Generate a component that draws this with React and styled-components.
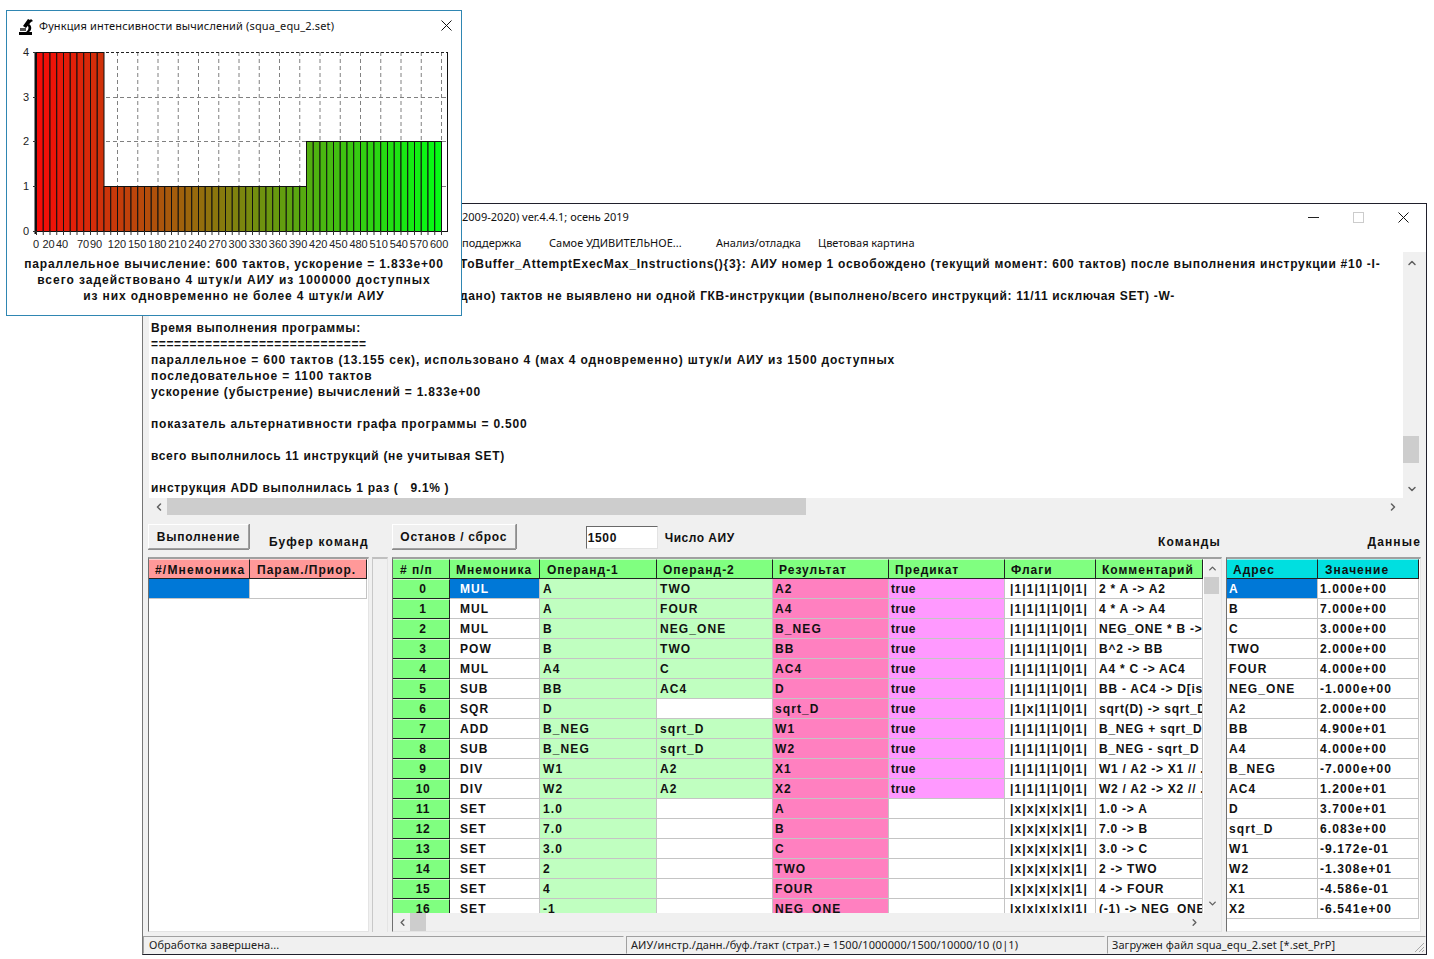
import React from "react";
import styled, { createGlobalStyle } from "styled-components";
import { ChevronUp, ChevronDown, ChevronLeft, ChevronRight } from "lucide-react";

const GlobalStyle = createGlobalStyle`
  html, body { margin: 0; padding: 0; background: #fff; }
  body { width: 1434px; height: 959px; overflow: hidden; font-family: "Liberation Sans", Arial, sans-serif; }
  * { box-sizing: border-box; }
`;

const ui = `"Noto Sans", "Open Sans", sans-serif`;
const sys = `font-family: "Liberation Sans", Arial, sans-serif; font-weight: 700; font-size: 12px; color: #111;`;

const Desktop = styled.div`
  position: relative;
  width: 1434px;
  height: 959px;
  background: #fff;
  overflow: hidden;
`;

const MainWindow = styled.div`
  position: absolute;
  left: 142px;
  top: 203px;
  width: 1285px;
  height: 752px;
  display: flex;
  flex-direction: column;
  background: #f0f0f0;
  border: 1px solid #20202c;
  border-left-color: #777;
`;

const TitleBar = styled.div`
  height: 28px;
  flex: none;
  display: flex;
  align-items: center;
  background: #fff;
  padding-left: 319px;
  font-family: ${ui};
  font-size: 11px;
  color: #111;
`;

const TitleText = styled.span`
  flex: 1;
  white-space: nowrap;
  margin-top: -3px;
`;

const WinButton = styled.span`
  width: 45px;
  height: 28px;
  display: flex;
  align-items: center;
  justify-content: center;
  margin-top: -2px;
`;

const MenuBar = styled.div`
  height: 20px;
  flex: none;
  display: flex;
  align-items: center;
  background: #fff;
  padding-left: 319px;
  font-family: ${ui};
  font-size: 11px;
  color: #111;
`;

const MenuItem = styled.span`
  width: ${(p) => p.$w}px;
  white-space: nowrap;
`;

const LogPanel = styled.div`
  height: 263px;
  flex: none;
  margin-left: 6px;
  width: 1271px;
  display: grid;
  grid-template-columns: 1254px 17px;
  grid-template-rows: 246px 17px;
  border-right: 1px solid #dcdcdc;
  border-bottom: 1px solid #dcdcdc;
`;

const LogBody = styled.div`
  background: #fff;
  padding: 4px 0 0 2px;
  overflow: hidden;
`;

const LogLine = styled.div`
  height: 16px;
  line-height: 16px;
  white-space: pre;
  padding-left: ${(p) => p.$indent || 0}px;
  letter-spacing: ${(p) => p.$ls}px;
  ${sys}
`;

const ScrollTrackV = styled.div`
  position: relative;
  background: #f0f0f0;
  display: flex;
  flex-direction: column;
  align-items: center;
  justify-content: space-between;
  padding: ${(p) => p.$pad || "4px 0"};
  color: #606060;
`;

const ScrollThumbV = styled.div`
  position: absolute;
  left: 0;
  width: ${(p) => p.$w}px;
  top: ${(p) => p.$top}px;
  height: ${(p) => p.$h}px;
  background: #cdcdcd;
`;

const ScrollTrackH = styled.div`
  position: relative;
  background: #f0f0f0;
  display: flex;
  align-items: center;
  justify-content: space-between;
  padding: 0 4px;
  color: #606060;
`;

const ScrollThumbH = styled.div`
  position: absolute;
  top: 0;
  bottom: 0;
  left: ${(p) => p.$left}px;
  width: ${(p) => p.$w}px;
  background: #cdcdcd;
`;

const Corner = styled.div`
  background: #f0f0f0;
`;

const Toolbar = styled.div`
  height: 42px;
  flex: none;
  position: relative;
  display: flex;
  padding: 9px 5px 0 5px;
`;

const RaisedButton = styled.button`
  width: ${(p) => p.$w}px;
  height: 25px;
  margin-left: ${(p) => p.$ml || 0}px;
  padding: 0;
  background: #f0f0f0;
  border: 1px solid;
  border-color: #fff #a0a0a0 #a0a0a0 #fff;
  box-shadow: 0 1px 0 #8c8c8c, 1px 0 0 #8c8c8c;
  letter-spacing: 0.75px;
  ${sys}
`;

const ToolLabel = styled.span`
  margin-left: ${(p) => p.$ml || 0}px;
  margin-top: ${(p) => p.$mt || 0}px;
  line-height: 16px;
  white-space: nowrap;
  letter-spacing: ${(p) => p.$ls || 1.15}px;
  ${sys}
`;

const SpacedRight = styled(ToolLabel)`
  position: absolute;
  top: 19px;
  right: ${(p) => p.$right}px;
`;

const NumberInput = styled.div`
  width: 72px;
  height: 23px;
  margin: 2px 0 0 70px;
  padding: 3px 0 0 1px;
  background: #fff;
  border: 1px solid;
  border-color: #696969 #e3e3e3 #e3e3e3 #696969;
  line-height: 16px;
  letter-spacing: 0.62px;
  ${sys}
`;

const TablesRow = styled.div`
  height: 375px;
  flex: none;
  display: flex;
  padding-left: 5px;
`;

const Frame = styled.div`
  width: ${(p) => p.$w}px;
  margin-left: ${(p) => p.$ml || 0}px;
  height: 375px;
  display: grid;
  grid-template-rows: 1fr ${(p) => (p.$hs ? "18px" : "0")};
  grid-template-columns: 1fr ${(p) => (p.$vs ? "17px" : "0")};
  background: #fff;
  border: 1px solid;
  border-color: #a0a0a0 #e4e4e4 #e4e4e4 #707070;
  border-top-width: 2px;
  overflow: hidden;
`;

const Strip = styled.div`
  width: 16px;
  margin-left: 3px;
  height: 375px;
  background: #f0f0f0;
  border-left: 1px solid #c8c8c8;
  border-top: 2px solid #c0c0c0;
  border-right: 1px solid #e4e4e4;
`;

const TableBody = styled.div`
  overflow: hidden;
  min-height: 0;
`;

const Row = styled.div`
  display: grid;
  grid-template-columns: ${(p) => p.$cols};
  height: 20px;
`;

const Head = styled.div`
  background: ${(p) => p.$bg};
  border-top: 1px solid rgba(255, 255, 255, 0.55);
  border-right: 1px solid #222;
  border-bottom: 1px solid #222;
  padding-left: ${(p) => p.$pad || 4}px;
  line-height: 20px;
  overflow: hidden;
  white-space: nowrap;
  letter-spacing: ${(p) => p.$ls || 1}px;
  ${sys}
`;

const Cell = styled.div`
  background: ${(p) => p.$bg || "#fff"};
  color: ${(p) => (p.$sel ? "#fff" : "#111")};
  border-right: 1px solid #c4c4c4;
  border-bottom: 1px solid #c4c4c4;
  padding-left: ${(p) => p.$pad || 3}px;
  line-height: 20px;
  overflow: hidden;
  white-space: pre;
  font-family: "Liberation Sans", Arial, sans-serif;
  font-weight: 700;
  font-size: 12px;
  letter-spacing: ${(p) => p.$ls || 1.1}px;
`;

const NumCell = styled.div`
  background: #80ff80;
  border-top: 1px solid #c8ffc8;
  border-right: 1px solid #222;
  border-bottom: 1px solid #222;
  padding-left: 4px;
  line-height: 18px;
  text-align: center;
  letter-spacing: 0.62px;
  ${sys}
`;

const StatusBar = styled.div`
  margin-top: 4px;
  flex: 1;
  display: flex;
  gap: 2px;
  font-family: ${ui};
  font-size: 11px;
  letter-spacing: 0.08px;
  color: #222;
`;

const StatusPanel = styled.div`
  width: ${(p) => p.$w}px;
  flex: ${(p) => (p.$w ? "none" : "1")};
  border: 1px solid;
  border-color: #a0a0a0 #f0f0f0 #f0f0f0 #a0a0a0;
  padding-left: ${(p) => p.$pad}px;
  line-height: 15px;
  white-space: nowrap;
  position: relative;
`;

const Grip = styled.svg`
  position: absolute;
  right: 0;
  bottom: 0;
`;

const Popup = styled.div`
  position: absolute;
  left: 6px;
  top: 10px;
  width: 456px;
  height: 306px;
  display: flex;
  flex-direction: column;
  background: #fff;
  border: 1px solid #2f86b2;
`;

const PopupTitle = styled.div`
  height: 30px;
  flex: none;
  display: flex;
  align-items: center;
  padding-left: 11px;
  font-family: ${ui};
  font-size: 11px;
  color: #111;
`;

const PopupTitleText = styled.span`
  flex: 1;
  margin: -2px 0 0 5px;
  white-space: nowrap;
  letter-spacing: 0.14px;
`;

const PopupClose = styled.span`
  width: 30px;
  display: flex;
  justify-content: center;
  margin-top: -1px;
`;

const ChartSvg = styled.svg`
  display: block;
  flex: none;
`;

const AxisLabel = styled.text`
  font-family: "Liberation Sans", Arial, sans-serif;
  font-size: 11px;
  fill: #222;
`;

const Caption = styled.div`
  text-align: center;
  margin-top: 1px;
`;

const CaptionLine = styled.div`
  line-height: 16px;
  white-space: nowrap;
  letter-spacing: ${(p) => p.$ls}px;
  ${sys}
`;

const Microscope = () => (
  <svg width="16" height="17" viewBox="0 0 16 17">
    <rect x="1" y="14" width="13" height="3" fill="#000" />
    <rect x="2" y="10" width="6" height="3" fill="#555" />
    <path d="M5 8 L10 1 L12 2 L13 1 L15 3 L13 4 L8 10 Z" fill="#000" />
    <path d="M11 6 C14 8 14 12 11 14 L8 14 C11 12 11 9 9.5 7.5 Z" fill="#000" />
  </svg>
);

const CloseIcon = ({ s = 11, c = "#111" }) => (
  <svg width={s} height={s} viewBox="0 0 11 11">
    <path d="M0.5 0.5 L10.5 10.5 M10.5 0.5 L0.5 10.5" stroke={c} strokeWidth="1" fill="none" />
  </svg>
);

const barW = 405 / 60;
const bars = Array.from({ length: 60 }, (_, i) => {
  const v = i < 10 ? 4 : i < 40 ? 1 : 2;
  const t = i / 59;
  return { i, v, color: `rgb(${Math.round(245 * (1 - t) + 5 * t)},${Math.round(12 * (1 - t) + 252 * t)},${Math.round(8 + 12 * t)})` };
});
const yOf = { 0: 231, 1: 186, 2: 141, 3: 97, 4: 52 };
const tickLabels = [
  [0, 36], [20, 48.5], [40, 62], [70, 83], [90, 96],
  ...Array.from({ length: 17 }, (_, i) => [120 + i * 30, 117 + i * 20.13]),
];

const Chart = () => (
  <ChartSvg width="454" height="214" viewBox="7 41 454 214">
    {Array.from({ length: 20 }, (_, k) => (
      <line key={k} x1={36.5 + (k + 1) * 20.25} x2={36.5 + (k + 1) * 20.25} y1="52" y2="231" stroke="#808080" strokeDasharray="4 3" />
    ))}
    {[97.5, 141.5, 186.5].map((y) => (
      <line key={y} x1="36" x2="447" y1={y} y2={y} stroke="#808080" strokeDasharray="4 3" />
    ))}
    <line x1="36" x2="447" y1="52.5" y2="52.5" stroke="#222" strokeDasharray="3 2" />
    {bars.map((b) => (
      <rect key={b.i} x={36 + b.i * barW + 0.5} y={yOf[b.v] + 0.5} width={barW} height={231 - yOf[b.v]} fill={b.color} stroke="#111" strokeWidth="1" />
    ))}
    <line x1="35.5" x2="35.5" y1="52" y2="234" stroke="#111" strokeWidth="2" />
    <line x1="447.5" x2="447.5" y1="52" y2="231" stroke="#111" />
    <line x1="36" x2="448" y1="231.5" y2="231.5" stroke="#111" />
    {Array.from({ length: 61 }, (_, i) => (
      <line key={i} x1={36.5 + i * barW} x2={36.5 + i * barW} y1="231" y2="235" stroke="#333" />
    ))}
    {[52, 97, 141, 186, 231].map((y) => (
      <line key={y} x1="33" x2="36" y1={y + 0.5} y2={y + 0.5} stroke="#333" />
    ))}
    {[[4, 52], [3, 97], [2, 141], [1, 186], [0, 231]].map(([n, y]) => (
      <AxisLabel key={n} x="29" y={y + 4} textAnchor="end">{n}</AxisLabel>
    ))}
    {tickLabels.map(([n, x]) => (
      <AxisLabel key={n} x={x} y="248" textAnchor="middle">{n}</AxisLabel>
    ))}
  </ChartSvg>
);

const G = "#c0ffc0", P = "#ff80c0", L = "#ff99ff", H = "#80ff80", SEL = "#0078d7";
const F1 = "|1|1|1|1|0|1|", FX = "|x|x|x|x|x|1|";
const commands = [
  ["MUL", "A", "TWO", "A2", "true", F1, "2 * A -> A2"],
  ["MUL", "A", "FOUR", "A4", "true", F1, "4 * A -> A4"],
  ["MUL", "B", "NEG_ONE", "B_NEG", "true", F1, "NEG_ONE * B ->"],
  ["POW", "B", "TWO", "BB", "true", F1, "B^2 -> BB"],
  ["MUL", "A4", "C", "AC4", "true", F1, "A4 * C -> AC4"],
  ["SUB", "BB", "AC4", "D", "true", F1, "BB - AC4 -> D[is"],
  ["SQR", "D", "", "sqrt_D", "true", "|1|x|1|1|0|1|", "sqrt(D) -> sqrt_D"],
  ["ADD", "B_NEG", "sqrt_D", "W1", "true", F1, "B_NEG + sqrt_D"],
  ["SUB", "B_NEG", "sqrt_D", "W2", "true", F1, "B_NEG - sqrt_D"],
  ["DIV", "W1", "A2", "X1", "true", F1, "W1 / A2 -> X1 // ."],
  ["DIV", "W2", "A2", "X2", "true", F1, "W2 / A2 -> X2 // ."],
  ["SET", "1.0", "", "A", "", FX, "1.0 -> A"],
  ["SET", "7.0", "", "B", "", FX, "7.0 -> B"],
  ["SET", "3.0", "", "C", "", FX, "3.0 -> C"],
  ["SET", "2", "", "TWO", "", FX, "2 -> TWO"],
  ["SET", "4", "", "FOUR", "", FX, "4 -> FOUR"],
  ["SET", "-1", "", "NEG_ONE", "", FX, "(-1) -> NEG_ONE"],
];
const data = [
  ["A", "1.000e+00"], ["B", "7.000e+00"], ["C", "3.000e+00"], ["TWO", "2.000e+00"],
  ["FOUR", "4.000e+00"], ["NEG_ONE", "-1.000e+00"], ["A2", "2.000e+00"], ["BB", "4.900e+01"],
  ["A4", "4.000e+00"], ["B_NEG", "-7.000e+00"], ["AC4", "1.200e+01"], ["D", "3.700e+01"],
  ["sqrt_D", "6.083e+00"], ["W1", "-9.172e-01"], ["W2", "-1.308e+01"], ["X1", "-4.586e-01"], ["X2", "-6.541e+00"],
];
const cmdCols = "57px 90px 117px 116px 116px 116px 91px 107px";
const dataCols = "91px 101px";
const bufCols = "101px 117px";
const cmdHeads = [["# п/п", 7], ["Мнемоника", 6], ["Операнд-1", 7], ["Операнд-2", 6], ["Результат", 6], ["Предикат", 6], ["Флаги", 6], ["Комментарий", 6]];

const logLines = [
  ["ToBuffer_AttemptExecMax_Instructions(){3}: АИУ номер 1 освобождено (текущий момент: 600 тактов) после выполнения инструкции #10 -I-", 0.73, 309],
  ["", 0],
  ["дано) тактов не выявлено ни одной ГКВ-инструкции (выполнено/всего инструкций: 11/11 исключая SET) -W-", 0.66, 309],
  ["", 0],
  ["Время выполнения программы:", 0.62],
  ["============================", 0.7],
  ["параллельное = 600 тактов (13.155 сек), использовано 4 (мах 4 одновременно) штук/и АИУ из 1500 доступных", 0.85],
  ["последовательное = 1100 тактов", 0.89],
  ["ускорение (убыстрение) вычислений = 1.833e+00", 0.8],
  ["", 0],
  ["показатель альтернативности графа программы = 0.500", 0.8],
  ["", 0],
  ["всего выполнилось 11 инструкций (не учитывая SET)", 0.68],
  ["", 0],
  ["инструкция ADD выполнилась 1 раз (   9.1% )", 0.67],
];

export default function App() {
  return (
    <Desktop>
      <GlobalStyle />
      <MainWindow>
        <TitleBar>
          <TitleText>2009-2020) ver.4.4.1; осень 2019</TitleText>
          <WinButton>
            <svg width="11" height="11" viewBox="0 0 11 11"><path d="M0 5.5 H11" stroke="#222" /></svg>
          </WinButton>
          <WinButton>
            <svg width="11" height="11" viewBox="0 0 11 11"><rect x="0.5" y="0.5" width="10" height="10" fill="none" stroke="#ccc" /></svg>
          </WinButton>
          <WinButton><CloseIcon /></WinButton>
        </TitleBar>
        <MenuBar>
          <MenuItem $w={87}>поддержка</MenuItem>
          <MenuItem $w={167}>Самое УДИВИТЕЛЬНОЕ...</MenuItem>
          <MenuItem $w={102}>Анализ/отладка</MenuItem>
          <MenuItem $w={110}>Цветовая картина</MenuItem>
        </MenuBar>
        <LogPanel>
          <LogBody>
            {logLines.map(([t, ls, indent], i) => (
              <LogLine key={i} $indent={indent} $ls={ls}>{t}</LogLine>
            ))}
          </LogBody>
          <ScrollTrackV $pad="5px 0 3px">
            <ChevronUp size={12} strokeWidth={3} />
            <ScrollThumbV $w={16} $top={184} $h={27} />
            <ChevronDown size={12} strokeWidth={3} />
          </ScrollTrackV>
          <ScrollTrackH>
            <ChevronLeft size={12} strokeWidth={3} />
            <ScrollThumbH $left={18} $w={639} />
            <ChevronRight size={12} strokeWidth={3} />
          </ScrollTrackH>
          <Corner />
        </LogPanel>
        <Toolbar>
          <RaisedButton $w={101}>Выполнение</RaisedButton>
          <ToolLabel $ml={20} $mt={10}>Буфер команд</ToolLabel>
          <RaisedButton $w={124} $ml={23}>Останов / сброс</RaisedButton>
          <NumberInput>1500</NumberInput>
          <ToolLabel $ml={7} $mt={6} $ls={0.5}>Число АИУ</ToolLabel>
          <SpacedRight $right={205}>Команды</SpacedRight>
          <SpacedRight $right={5}>Данные</SpacedRight>
        </Toolbar>
        <TablesRow>
          <Frame $w={221}>
            <TableBody>
              <Row $cols={bufCols}>
                <Head $bg="#ff9999" $pad={6} $ls={1.2}>#/Мнемоника</Head>
                <Head $bg="#ff9999" $pad={7}>Парам./Приор.</Head>
              </Row>
              <Row $cols={bufCols}>
                <Cell $bg={SEL} $sel />
                <Cell />
              </Row>
            </TableBody>
          </Frame>
          <Strip />
          <Frame $w={830} $ml={4} $vs $hs>
            <TableBody>
              <Row $cols={cmdCols}>
                {cmdHeads.map(([h, pad]) => (
                  <Head key={h} $bg={H} $pad={pad}>{h}</Head>
                ))}
              </Row>
              {commands.map((r, i) => (
                <Row key={i} $cols={cmdCols}>
                  <NumCell>{i}</NumCell>
                  <Cell $pad={10} $bg={i === 0 ? SEL : "#fff"} $sel={i === 0}>{r[0]}</Cell>
                  <Cell $bg={G}>{r[1]}</Cell>
                  <Cell $bg={r[2] ? G : "#fff"}>{r[2]}</Cell>
                  <Cell $bg={P} $pad={2}>{r[3]}</Cell>
                  <Cell $bg={r[4] ? L : "#fff"} $pad={2} $ls={0.62}>{r[4]}</Cell>
                  <Cell $pad={5}>{r[5]}</Cell>
                  <Cell $ls={0.75}>{r[6]}</Cell>
                </Row>
              ))}
            </TableBody>
            <ScrollTrackV>
              <ChevronUp size={11} strokeWidth={3} />
              <ScrollThumbV $w={15} $top={18} $h={17} />
              <ChevronDown size={11} strokeWidth={3} />
            </ScrollTrackV>
            <ScrollTrackH>
              <ChevronLeft size={11} strokeWidth={3} />
              <ScrollThumbH $left={17} $w={16} />
              <ChevronRight size={11} strokeWidth={3} />
            </ScrollTrackH>
            <Corner />
          </Frame>
          <Frame $w={195} $ml={4}>
            <TableBody>
              <Row $cols={dataCols}>
                <Head $bg="#00dfe0" $pad={6}>Адрес</Head>
                <Head $bg="#00dfe0" $pad={7}>Значение</Head>
              </Row>
              {data.map(([a, v], i) => (
                <Row key={a} $cols={dataCols}>
                  <Cell $pad={2} $bg={i === 0 ? SEL : "#fff"} $sel={i === 0}>{a}</Cell>
                  <Cell $pad={2}>{v}</Cell>
                </Row>
              ))}
            </TableBody>
          </Frame>
        </TablesRow>
        <StatusBar>
          <StatusPanel $w={481} $pad={5}>Обработка завершена...</StatusPanel>
          <StatusPanel $w={479} $pad={4}>АИУ/инстр./данн./буф./такт (страт.) = 1500/1000000/1500/10000/10 (0|1)</StatusPanel>
          <StatusPanel $pad={4}>
            Загружен файл squa_equ_2.set [*.set_PrP]
            <Grip width="12" height="12" viewBox="0 0 12 12">
              <path d="M11 2 L2 11 M11 6 L6 11 M11 9 L9 11" stroke="#a8a8a8" fill="none" />
            </Grip>
          </StatusPanel>
        </StatusBar>
      </MainWindow>
      <Popup>
        <PopupTitle>
          <Microscope />
          <PopupTitleText>Функция интенсивности вычислений (squa_equ_2.set)</PopupTitleText>
          <PopupClose><CloseIcon /></PopupClose>
        </PopupTitle>
        <Chart />
        <Caption>
          <CaptionLine $ls={0.82}>параллельное вычисление: 600 тактов, ускорение = 1.833e+00</CaptionLine>
          <CaptionLine $ls={0.96}>всего задействовано 4 штук/и АИУ из 1000000 доступных</CaptionLine>
          <CaptionLine $ls={0.86}>из них одновременно не более 4 штук/и АИУ</CaptionLine>
        </Caption>
      </Popup>
    </Desktop>
  );
}
